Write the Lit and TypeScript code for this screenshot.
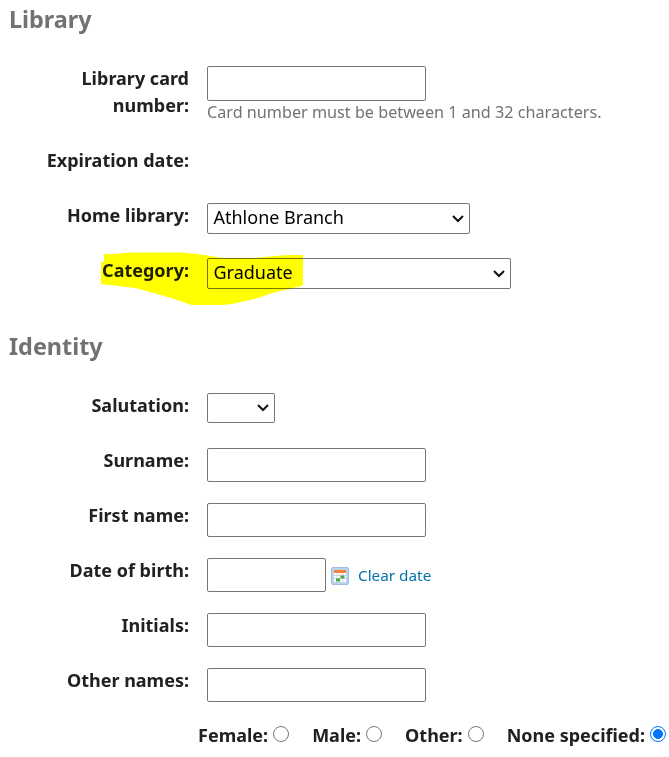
import { LitElement, html, css } from "lit";
import { customElement } from "lit/decorators.js";

@customElement("app-root")
export class AppRoot extends LitElement {
  static styles = css`
    :host { display: block; width: 669px; height: 757px; overflow: hidden; background: #fff; font-family: "Noto Sans", sans-serif; color: #202124; }
    * { box-sizing: border-box; }
    .page { position: relative; padding-top: 3px; background: #fff; }
    h2 { margin: 0; padding-left: 9px; font-size: 23.4px; line-height: 32px; height: 32px; font-weight: 700; color: #727272; }
    .rows { padding-top: 30px; }
    .library { height: 327px; }
    .row { display: flex; height: 55px; }
    .row.first { height: 82px; }
    .label { width: 189px; flex: none; margin-right: 18px; text-align: right; font-weight: 700; font-size: 18px; line-height: 27px; white-space: nowrap; }
    .first .label { white-space: normal; padding-left: 60px; }
    .box { border: 1px solid #767676; border-radius: 2px; width: 219px; height: 34px; flex: none; margin-top: 1px; }
    .first .box { height: 35px; }
    .short { width: 119px; }
    .sel { display: flex; align-items: center; justify-content: space-between; height: 31px; padding: 0 5px; font-size: 18px; line-height: 27px; color: #000; }
    .sel span { margin-top: -2px; padding-left: 0.5px; }
    .home { width: 263px; }
    .cat { width: 304px; }
    .sal { width: 68px; height: 30px; }
    .chev { width: 12px; height: 8px; display: block; }
    .hint { font-size: 16.2px; line-height: 22px; color: #727272; white-space: nowrap; }
    .cal { width: 18px; height: 18px; margin: 10px 0 0 5px; flex: none; }
    .clear { font-size: 15.3px; line-height: 36px; color: #0174ad; margin-left: 9px; white-space: nowrap; }
    .mark { position: absolute; left: 0; top: 0; width: 669px; height: 330px; mix-blend-mode: multiply; pointer-events: none; }
    .radios { display: flex; font-weight: 700; font-size: 18px; line-height: 27px; padding-left: 198px; white-space: nowrap; }
    .opt { display: flex; margin-right: 23px; }
    .dot { width: 16px; height: 16px; margin: 4px 0 0 5px; border: 1px solid #767676; border-radius: 50%; flex: none; }
    .dot.on { border-color: #0075ff; background: radial-gradient(circle, #0075ff 4.6px, #fff 5.2px); }
  `;
  row(name: string, content: unknown, cls = "") {
    return html`<div class="row ${cls}"><div class="label">${name}</div>${content}</div>`;
  }
  select(text: string, cls: string) {
    return html`<div class="box sel ${cls}"><span>${text}</span><svg class="chev" viewBox="0 0 12 8"><path d="M1 1 L6 6 L11 1" fill="none" stroke="#111" stroke-width="2"/></svg></div>`;
  }
  radio(text: string, on = false) {
    return html`<div class="opt">${text}<div class="dot ${on ? "on" : ""}"></div></div>`;
  }
  render() {
    const input = html`<div class="box"></div>`;
    return html`<div class="page">
      <section class="library">
        <h2>Library</h2>
        <div class="rows">
          ${this.row("Library card number:", html`<div>${input}<div class="hint">Card number must be between 1 and 32 characters.</div></div>`, "first")}
          ${this.row("Expiration date:", "")}
          ${this.row("Home library:", this.select("Athlone Branch", "home"))}
          ${this.row("Category:", this.select("Graduate", "cat"))}
        </div>
      </section>
      <section>
        <h2>Identity</h2>
        <div class="rows">
          ${this.row("Salutation:", this.select("", "sal"))}
          ${this.row("Surname:", input)}
          ${this.row("First name:", input)}
          ${this.row("Date of birth:", html`<div class="box short"></div>
            <svg class="cal" viewBox="0 0 18 18">
              <rect x=".5" y=".5" width="17" height="17" rx="1.5" fill="#b9d3f0" stroke="#9cbce6"/>
              <rect x="3" y="3" width="12" height="12" fill="#fff"/>
              <rect x="3" y="3" width="12" height="3" fill="#f58238"/>
              <path d="M3 8.5H15M3 11.5H15M6 6V15M9 6V15M12 6V15" stroke="#c9cdd3" stroke-width=".8"/>
              <path d="M9.5 8.5h4v3h-4zM5 11.5h4v3h-4z" fill="#4fa64b"/>
            </svg>
            <span class="clear">Clear date</span>`)}
          ${this.row("Initials:", input)}
          ${this.row("Other names:", input)}
        </div>
        <div class="radios">${this.radio("Female:")}${this.radio("Male:")}${this.radio("Other:")}${this.radio("None specified:", true)}</div>
      </section>
      <svg class="mark" viewBox="0 0 669 330"><path fill="#ff0" d="M104 254H114L130 252.500H182L205 255L222 258H255L274 256L290 255H303V285L301 286L285 290L272 293L258 298L246 301L232 304L222 305H191L183 302L168 297L150 292L135 288L118 286L101 284V262H104Z"/></svg>
    </div>`;
  }
}
